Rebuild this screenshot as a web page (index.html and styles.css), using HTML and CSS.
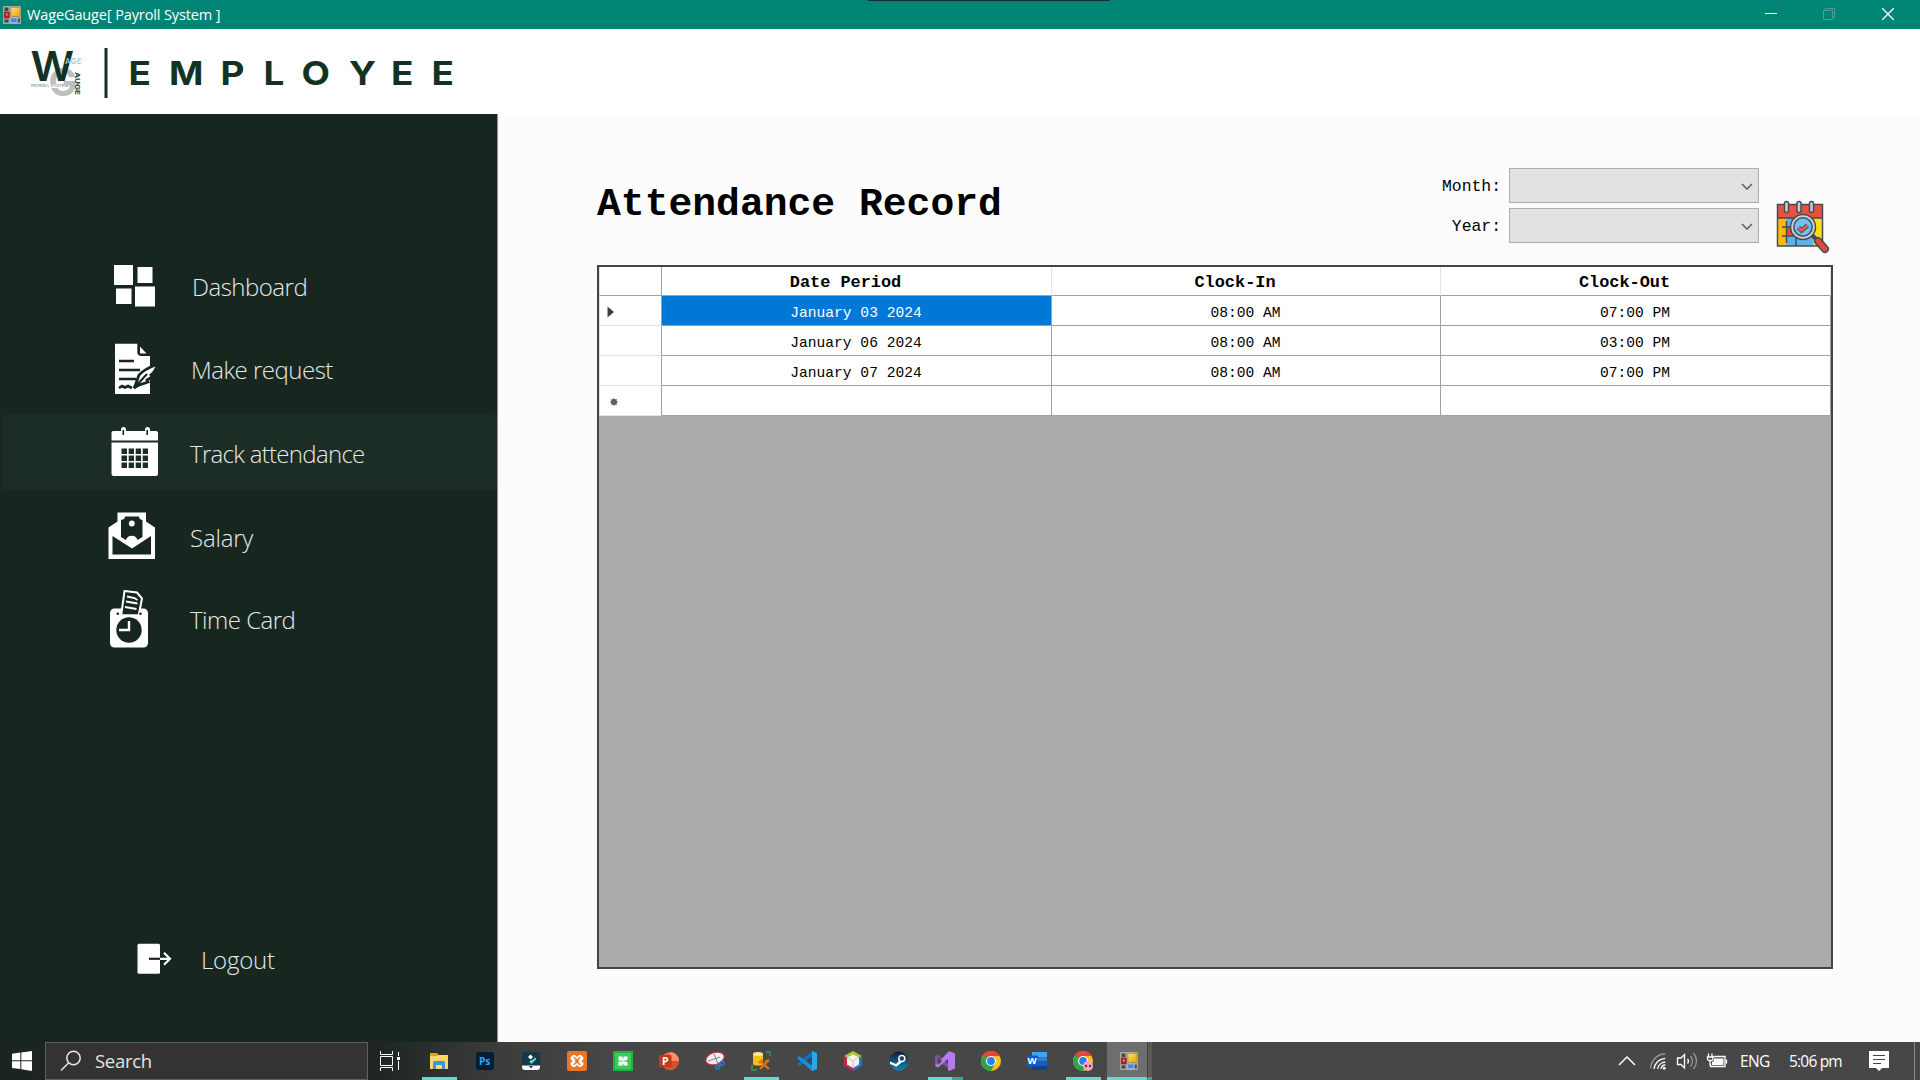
FILE: index.html
```html
<!DOCTYPE html>
<html lang="en">
<head>
<meta charset="utf-8">
<title>WageGauge[ Payroll System ]</title>
<link rel="stylesheet" href="styles.css">
</head>
<body>
<svg class="defs" aria-hidden="true">
  <defs>
    <linearGradient id="gold" x1="0" y1="0" x2="1" y2="1"><stop offset="0" stop-color="#ffe37a"/><stop offset="1" stop-color="#e9a400"/></linearGradient>
    <linearGradient id="steam" x1="0" y1="0" x2="0" y2="1"><stop offset="0" stop-color="#131a3a"/><stop offset="1" stop-color="#1387b8"/></linearGradient>
    <symbol id="form-app" viewBox="0 0 18 18">
      <rect width="18" height="18" rx="1" fill="#a9a9a5"/>
      <rect x="1.5" y="1.5" width="4" height="3.5" fill="#3c4a48"/><rect x="1.5" y="13.500" width="4" height="3" fill="#3c4a48"/><rect x="14.800" y="12.500" width="2" height="4" fill="#3c4a48"/>
      <rect x="8" y="1.200" width="9" height="9" fill="url(#gold)" stroke="#a87700" stroke-width=".5"/>
      <rect x="1.200" y="6" width="5" height="6" fill="#c41e1e" stroke="#7d0f0f" stroke-width=".5"/><rect x="3" y="7.500" width="1.500" height="2" fill="#f39a8c"/>
      <rect x="7.500" y="12" width="6.500" height="4.500" fill="#4d86e6" stroke="#b8d0fa" stroke-width=".5"/>
    </symbol>
    <symbol id="chrome" viewBox="0 0 20 20">
      <circle cx="10" cy="10" r="10" fill="#fcc31e"/>
      <path d="M10 10 1.340 5A10 10 0 0 1 18.660 5L10 5.500z" fill="#ea4335"/>
      <path d="M1.340 5A10 10 0 0 0 10 20L14.200 12.500 10 10 5.800 12.500z" fill="#2ea24c"/>
      <path d="M1.340 5 5.800 12.600 8 6z" fill="#2ea24c"/>
      <circle cx="10" cy="10" r="5" fill="#fff"/><circle cx="10" cy="10" r="3.900" fill="#2f7bea"/>
    </symbol>
  </defs>
</svg>

<header class="titlebar">
  <svg class="titlebar-icon"><use href="#form-app"/></svg>
  <span class="titlebar-text">WageGauge[ Payroll System ]</span>
  <div class="titlebar-notch"></div>
  <svg class="window-buttons" width="164" height="29" viewBox="1756 0 164 29" fill="none">
    <path d="M1765 13.500h12" stroke="#fff"/>
    <path d="M1823.500 10.500h9v9h-9zM1825.500 10V8.500h9v9H1833" stroke="#45a195"/>
    <path d="m1882.300 8.300 11.400 11.400m0-11.400-11.400 11.400" stroke="#fff" stroke-width="1.300"/>
  </svg>
</header>

<div class="brand">
  <svg width="497" height="84" viewBox="0 29 497 84">
    <text class="logo-g" x="48.500" y="95.500">G</text>
    <path d="M47 84h21v4H47z" fill="#fff"/>
    <text class="logo-w" x="30.500" y="80.500" textLength="43.500" lengthAdjust="spacingAndGlyphs">W</text>
    <text class="logo-age" x="65" y="63.500" textLength="16.500">AGE</text>
    <text class="logo-auge" transform="translate(74.500 72) rotate(90)" textLength="23" lengthAdjust="spacingAndGlyphs">AUGE</text>
    <text class="logo-sub" x="31" y="87" textLength="37" lengthAdjust="spacingAndGlyphs">PAYROLL SYSTEM</text>
    <path d="M104.500 48h3v50h-3z" fill="#123324"/>
    <text class="brand-name" transform="scale(1.12 1)" y="84.700" x="114.800 150.900 196.800 235.200 269.300 311.600 349 385.300">EMPLOYEE</text>
  </svg>
</div>

<div class="body">
  <nav class="sidebar">
    <a class="nav-item nav-dashboard">
      <svg viewBox="106 249 56 75"><path fill="#fff" d="M114 265h19v20h-19zM137.500 267h15v16h-15zM116 288.500h15.500v15.500H116zM135 286.500h20v20h-20z"/></svg>
      <span>Dashboard</span>
    </a>
    <a class="nav-item nav-request">
      <svg viewBox="106 332 56 75"><path fill="#fff" d="M115 343.700h22.300V352q0 4 4 4h8.700v38h-35z"/><path fill="#fff" d="M140 346.500v7h6.500z"/><path d="M119 361h15M119 370h21M119 379h17M119 388l3-2 3 1.500 3-1.500 4 2" stroke="#172720" stroke-width="2.700" fill="none"/><path d="M134 388c2-3 3-8 5-13 4-5 11-8 19-11-2 5-4 9-7 11l1 2-5 3 1 2-6 2c-3 0-5 2-8 4z" fill="#fff" stroke="#172720" stroke-width="2.800"/><path d="m134 388 13-14" stroke="#172720" stroke-width="2"/></svg>
      <span>Make request</span>
    </a>
    <a class="nav-item nav-attendance active">
      <svg viewBox="106 415 56 75"><path fill="#fff" d="M113 431h8v-1.500a2.500 2.500 0 0 1 5 0v1.500h19v-1.500a2.500 2.500 0 0 1 5 0v1.500h6q2 0 2 2v7.500h-46.500V433q0-2 1.500-2zM111.500 442.500H158V474q0 2-2 2h-42.500q-2 0-2-2z"/><path stroke="#172720" stroke-width="1.600" d="M123.300 430v5M147.200 430v5"/><path fill="#1c2d26" d="M121.500 448.500h5.500v5.500h-5.500zM128.700 448.500h5.300v5.500h-5.300zM135.700 448.500h5.300v5.500h-5.300zM142.700 448.500h5.300v5.500h-5.300zM121.500 455.500h5.500v5.500h-5.500zM128.700 455.500h5.300v5.500h-5.300zM135.700 455.500h5.300v5.500h-5.300zM142.700 455.500h5.300v5.500h-5.300zM121.500 462.500h5.500v5.500h-5.500zM128.700 462.500h5.300v5.500h-5.300zM135.700 462.500h5.300v5.500h-5.300zM142.700 462.500h5.300v5.500h-5.300z"/></svg>
      <span>Track attendance</span>
    </a>
    <a class="nav-item nav-salary">
      <svg viewBox="106 498 56 75"><path fill="#fff" d="M117.500 512.500h28.500v9l9 6V559h-46.500v-31.500l9-6z"/><path fill="#172720" d="M125 516.500h14q0 3 3.500 3.500v17l-5 3a6 6 0 0 0-11.500 0l-5-3v-17q4-.500 4-3.500zM112.500 536l19.500 12.500L151 536v18.500h-38.500z"/><circle cx="131.800" cy="523.500" r="2.900" fill="#fff"/></svg>
      <span>Salary</span>
    </a>
    <a class="nav-item nav-timecard">
      <svg viewBox="106 581 56 75"><rect x="110" y="608.500" width="38" height="39" rx="4.500" fill="#fff"/><path d="m124.500 591 12.500 1.500 5 6-3.500 18h-17.500z" fill="#172720" stroke="#fff" stroke-width="2"/><path d="m127 596.500 7.500 1.500 3 2M126 601.500l11.500 2M125 607l11.500 2" stroke="#fff" stroke-width="1.800" fill="none"/><path d="M121 615.500h18.500" stroke="#fff" stroke-width="2.500"/><circle cx="117.800" cy="613.700" r="1.300" fill="#172720"/><circle cx="140.500" cy="613.700" r="1.300" fill="#172720"/><circle cx="129" cy="630" r="12.700" fill="#172720"/><path d="M129 621v9h-10" fill="none" stroke="#fff" stroke-width="2.400"/></svg>
      <span>Time Card</span>
    </a>
    <a class="nav-item nav-logout">
      <svg viewBox="134 921 40 75"><rect x="137.500" y="943.700" width="22.500" height="30" rx="1.500" fill="#fff"/><path d="M149 958.800h11" stroke="#172720" stroke-width="2.200"/><path d="M160 958.800h10M164 952.800l6 6-6 6" stroke="#fff" stroke-width="2.200" fill="none"/></svg>
      <span>Logout</span>
    </a>
  </nav>

  <main class="content">
    <div class="content-head">
      <h1>Attendance Record</h1>
      <div class="filters">
        <label class="filter-row"><span>Month:</span><span class="select"><svg width="12" height="8" viewBox="0 0 12 8"><path d="m1 1 5 5 5-5" fill="none" stroke="#555" stroke-width="1.400"/></svg></span></label>
        <label class="filter-row"><span>Year:</span><span class="select"><svg width="12" height="8" viewBox="0 0 12 8"><path d="m1 1 5 5 5-5" fill="none" stroke="#555" stroke-width="1.400"/></svg></span></label>
      </div>
      <svg class="search-calendar" width="54" height="54" viewBox="1776 200 54 54">
        <rect x="1777.500" y="215" width="45" height="31" fill="#ffba08"/>
        <path fill="#5bb3ea" d="M1786.500 218h27v28h-27z"/><path fill="#ffe00f" d="M1813.500 218h9v28h-9z"/><path fill="#e04a3c" d="M1786.500 227h10v8h-10z"/>
        <rect x="1777.500" y="204.500" width="45" height="13.500" fill="#e8503f"/>
        <path d="M1777.500 204.500h45V246h-45zM1777.500 218h45M1786.500 221v22M1796 236v10M1782 227h14M1782 236h14" stroke="#454b54" stroke-width="1.500" fill="none"/>
        <path d="M1786.500 203.500v7M1799 203.500v7M1811.500 203.500v7" stroke="#454b54" stroke-width="5.500" stroke-linecap="round"/><path d="M1786.500 203.500v7M1799 203.500v7M1811.500 203.500v7" stroke="#c8ccd2" stroke-width="2.600" stroke-linecap="round"/>
        <path d="m1812 235 7 7" stroke="#454b54" stroke-width="4"/><path d="m1818 241 7 8" stroke="#454b54" stroke-width="8" stroke-linecap="round"/><path d="m1818 241 7 8" stroke="#e04a3c" stroke-width="5" stroke-linecap="round"/>
        <circle cx="1803" cy="227" r="12.500" fill="#cfd3d8" stroke="#454b54" stroke-width="1.500"/><circle cx="1803" cy="227" r="9.200" fill="#6dc0f2" stroke="#454b54" stroke-width="1.500"/>
        <path d="m1798.500 227.500 3 3 6-5" fill="none" stroke="#454b54" stroke-width="4.500"/><path d="m1798.500 227.500 3 3 6-5" fill="none" stroke="#f0604d" stroke-width="2.400"/>
      </svg>
    </div>

    <div class="grid">
      <div class="grid-row grid-header"><div></div><div>Date Period</div><div>Clock-In</div><div>Clock-Out</div></div>
      <div class="grid-row"><div><svg width="8" height="12" viewBox="0 0 8 12"><path d="m.500.500 6.500 5.500-6.500 5.500z" fill="#404040"/></svg></div><div class="selected">January 03 2024</div><div>08:00 AM</div><div>07:00 PM</div></div>
      <div class="grid-row"><div></div><div>January 06 2024</div><div>08:00 AM</div><div>03:00 PM</div></div>
      <div class="grid-row"><div></div><div>January 07 2024</div><div>08:00 AM</div><div>07:00 PM</div></div>
      <div class="grid-row"><div><svg class="new-mark" width="8" height="8" viewBox="0 0 8 8"><circle cx="4" cy="4" r="3" fill="#505050"/><path d="M4 0v8M0 4h8M1.200 1.200l5.600 5.600M6.800 1.200 1.200 6.800" stroke="#666" stroke-width=".8"/></svg></div><div></div><div></div><div></div></div>
    </div>
  </main>
</div>

<footer class="taskbar">
  <div class="start"><svg width="20" height="20" viewBox="0 0 20 20"><path fill="#fff" d="M0 2.800 8.300 1.600v7.700H0zM9.300 1.500 20 0v9.300H9.300zM0 10.300h8.300V18L0 16.900zM9.300 10.300H20V20L9.300 18.200z"/></svg></div>
  <div class="search"><svg width="22" height="22" viewBox="0 0 22 22"><circle cx="13.500" cy="8" r="6.700" fill="none" stroke="#e8e8e8" stroke-width="1.500"/><path d="M8.700 12.800 1 20.500" stroke="#e8e8e8" stroke-width="1.500"/></svg><span>Search</span></div>
  <div class="apps">
    <div class="app task-view"><svg viewBox="0 0 20 20" fill="none" stroke="#fff"><path d="M.500 0v3.500h12V0M.500 5.500h12v9H.500zM.500 20v-3.500h12V20M18.500 1v4M18.500 10v9"/><path d="M17 6h3v3h-3z" fill="#fff" stroke="none"/></svg></div>
    <div class="app open"><svg viewBox="0 0 20 20"><path fill="#e6a20a" d="M1 2h7l2 2v4H1z"/><path fill="#ffd767" d="M1 5h8l1-1h9v14H1z"/><path fill="#3a96dd" d="M4 12q0-2 2-2h8q2 0 2 2v6h-3v-4H7v4H4z"/></svg></div>
    <div class="app"><svg viewBox="0 0 20 20"><rect x="1" y="1" width="18" height="18" rx="3" fill="#001e36"/><text x="4" y="13.500" font-family="Open Sans" font-size="10" font-weight="700" fill="#31a8ff">Ps</text></svg></div>
    <div class="app"><svg viewBox="0 0 20 20"><rect x="1" y="1" width="18" height="18" rx="3" fill="#17384a"/><path d="M9.500 3.500 12 6 9.500 8.500 7 6z" fill="#fff"/><path d="m13.500 6 2 2-5 5-2.500-2.500 5.500-3z" fill="#50e3c2"/><path d="M1 14.500h18V16a3 3 0 0 1-3 3H4a3 3 0 0 1-3-3z" fill="#fff"/><path d="m8 15 2 2.500 2-2.500z" fill="#17384a"/></svg></div>
    <div class="app"><svg viewBox="0 0 20 20"><rect width="20" height="20" rx="2" fill="#ee7522"/><path d="M6 4h2l2 2 2-2h2l2.500 2.500V8l-2 2 2 2v1.500L14 16h-2l-2-2-2 2H6l-2.500-2.500V12l2-2-2-2V6.500z" fill="#fff"/><path d="M6.800 6.200 10 9l3.200-2.800M6.800 13.800 10 11l3.200 2.800M8 10h4" stroke="#ee7522" stroke-width="1.400" fill="none"/></svg></div>
    <div class="app"><svg viewBox="0 0 20 20"><rect width="20" height="20" fill="#20b43c"/><rect x="2" y="2" width="16" height="16" fill="#3fc95c"/><path fill="#fff" d="M5.500 5.500h4v4h-4zM10.500 5.500h4v3l-1.500 1h-2.500zM5.500 10.500h4v4h-4zM10.500 10.500H13l1.500 1v3h-4z"/><path fill="#fff" opacity=".7" d="M9 7h2v6H9z"/></svg></div>
    <div class="app"><svg viewBox="0 0 20 20"><circle cx="11" cy="10" r="9" fill="#ed6c47"/><path d="M11 1a9 9 0 0 1 9 9h-9z" fill="#ff8f6b"/><path d="M20 10a9 9 0 0 1-16 5l7-5z" fill="#d35230"/><rect y="4" width="12.500" height="12" rx="1" fill="#c13b1b"/><text x="3" y="13.700" font-family="Open Sans" font-size="10.500" font-weight="700" fill="#fff">P</text></svg></div>
    <div class="app"><svg viewBox="0 0 20 20"><ellipse cx="10" cy="7.500" rx="9.500" ry="6" transform="rotate(-18 10 7.500)" fill="#f1eded" stroke="#c9283a" stroke-width="1.200"/><path d="m3 10 12-4M9 3l4 10" stroke="#777" stroke-width=".9"/><circle cx="12.500" cy="16" r="2" fill="none" stroke="#1687cf" stroke-width="1.600"/><circle cx="17" cy="12.500" r="2" fill="none" stroke="#1687cf" stroke-width="1.600"/></svg></div>
    <div class="app open"><svg viewBox="0 0 20 20"><path d="M15 1h4v4M1 14v5h5" fill="none" stroke="#3b9a45" stroke-width="1.500"/><path d="M2 3v10c0 2 10 2 10 0V3z" fill="#f2c316"/><ellipse cx="7" cy="3" rx="5" ry="2" fill="#fbe98d"/><path d="m9 18 8-8M10 11l8 7" stroke="#e36f16" stroke-width="2"/><path d="m8 12 4-3M14 11l4-2" stroke="#e36f16" stroke-width="2.500"/></svg></div>
    <div class="app"><svg viewBox="0 0 20 20"><path d="m15 0 .5 5L2.500 15 0 13z" fill="#0877b9"/><path d="m0 7 2.500-2L15.500 15l-.5 5z" fill="#1690d8"/><path d="m15 0 5 2v16l-5 2z" fill="#28a8f0"/></svg></div>
    <div class="app"><svg viewBox="0 0 20 20"><path d="m10 0 9 5-9 6-9-6z" fill="#a8c83b"/><path d="M1 5v10l9 5V10z" fill="#c42756"/><path d="M19 5v10l-9 5V10z" fill="#2277c4"/><path d="m10 3.500 6 3v7l-6 3.500-6-3.500v-7z" fill="#f2f2ef"/><path d="m4 6.500 6 3.500 6-3.500M10 10v7" stroke="#b7bdba" stroke-width=".8" fill="none"/></svg></div>
    <div class="app"><svg viewBox="0 0 20 20"><circle cx="10" cy="10" r="9.500" fill="url(#steam)"/><circle cx="12.800" cy="7.500" r="3" fill="none" stroke="#fff" stroke-width="1.500"/><path d="m1 10.500 6 2.500 3-3 3 1-4 3.500a2.500 2.500 0 0 1-4 0L1 13z" fill="#fff"/></svg></div>
    <div class="app open stacked"><svg viewBox="0 0 20 20"><path d="M0 5 3 3.500 16 16v4L3 9v7.500L0 15z" fill="#7a50b4"/><path d="m14 0 6 2.500v15L14 20l-1-1V8L3 16.500 0 15 14 0z" fill="#b57aec"/><path d="m3 6 4 4-4 4z" fill="#484848"/></svg></div>
    <div class="app"><svg><use href="#chrome"/></svg></div>
    <div class="app"><svg viewBox="0 0 20 20"><path fill="#41a5ee" d="M5 1h15v5H5z"/><path fill="#2b7cd3" d="M5 6h15v4H5z"/><path fill="#185abd" d="M5 10h15v5H5z"/><path fill="#103f91" d="M5 15h15v4H5z"/><rect y="4.500" width="11" height="11" rx="1" fill="#185abd"/><text x="0.500" y="13.200" font-family="Open Sans" font-size="9.500" font-weight="700" fill="#fff">W</text></svg></div>
    <div class="app open"><svg viewBox="0 0 20 20"><use href="#chrome"/><circle cx="15" cy="15" r="5" fill="#f2a9c0"/><circle cx="13" cy="15" r="1.200" fill="#54333e"/><circle cx="17" cy="15" r="1.200" fill="#54333e"/></svg></div>
    <div class="app current"><svg viewBox="-1 -1 20 20"><use href="#form-app" width="18" height="18"/></svg></div>
    <div class="stack-edge"></div>
  </div>
  <div class="tray">
    <svg width="118" height="38" viewBox="1614 1042 118 38" fill="none" stroke="#fff" stroke-width="1.300">
      <path d="m1619 1065 8-8 8 8" stroke-width="1.500"/>
      <g transform="translate(1650 1053)"><path d="M.700 15.500A14.500 14.500 0 0 1 15.300 1" stroke="#999"/><path d="M4 16A12 12 0 0 1 15.300 5.300M7.500 16A8.500 8.500 0 0 1 15.300 9M11 16a4.500 4.500 0 0 1 4.300-4"/><path d="M13 14h2.500v2.500H13z" fill="#fff" stroke="none"/></g>
      <path d="M1677.500 1058h3.500l3.500-3.500v13.500l-3.500-3.500h-3.500zM1687.500 1059q2 2 0 4.500"/><path d="M1690.500 1056q4 5 0 10.500M1693.500 1053q6 8 0 16" stroke="#999"/>
      <path d="M1713.500 1056.500h11.500v10h-14.500v-3M1726.500 1059.500v4M1708.500 1053.500v3M1712 1053.500v3M1707.500 1057h5.500v2q0 1.500-1.500 1.500h-2.500q-1.500 0-1.500-1.500zM1710 1060.500v5"/><path d="M1714 1058.500h9.500v6.500H1712v-3l2-1z" fill="#fff" stroke="none"/>
    </svg>
    <span class="lang">ENG</span>
    <span class="clock">5:06 pm</span>
    <svg class="notice" width="20" height="20" viewBox="0 0 20 20"><path d="M0 0h20v17h-7l-3 3-3-3H0z" fill="#fff"/><path d="M4 4.500h12M4 8.500h12M4 12.500h8" stroke="#444" stroke-width="1.200"/></svg>
    <div class="show-desktop"></div>
  </div>
</footer>
</body>
</html>
```
FILE: styles.css
```css
* { box-sizing: border-box; }
body {
  margin: 0;
  width: 1920px;
  height: 1080px;
  overflow: hidden;
  display: flex;
  flex-direction: column;
  background: #fcfcfc;
  font-family: "Open Sans", "Noto Sans", sans-serif;
}
svg { display: block; flex: none; }
.defs { position: absolute; width: 0; height: 0; }

/* Title bar */
.titlebar {
  position: relative;
  height: 29px;
  flex: none;
  display: flex;
  align-items: center;
  background: #008575;
  color: #fff;
  padding-left: 3px;
}
.titlebar-icon { width: 18px; height: 18px; }
.titlebar-text { margin-left: 6px; font-size: 14.5px; letter-spacing: -0.12px; white-space: nowrap; }
.titlebar-notch { position: absolute; left: 868px; top: 0; width: 242px; height: 1px; background: #17302c; }
.window-buttons { margin-left: auto; }

/* Brand strip */
.brand { height: 85px; flex: none; background: #fff; }
.brand-name { font: 700 33px Inter, sans-serif; fill: #123324; }
.logo-w { font: 600 40.5px Inter, sans-serif; fill: #123324; }
.logo-g { font: 700 38px Inter, sans-serif; fill: #bcbfbe; }
.logo-age { font: 600 7.5px Inter, sans-serif; fill: #a9c9be; }
.logo-auge { font: 800 6.5px Inter, sans-serif; fill: #2e4a3f; }
.logo-sub { font: 600 3.4px Inter, sans-serif; fill: #8d9a95; }

.body { display: flex; height: 928px; flex: none; }

/* Sidebar */
.sidebar {
  width: 498px;
  height: 928px;
  padding: 135px 0 0 2px;
  display: flex;
  flex-direction: column;
  gap: 8px;
  background: #172720;
  border-right: 1px solid #8d9390;
}
.nav-item {
  height: 75px;
  padding-left: 104px;
  display: flex;
  align-items: center;
  color: #e6e8e7;
  font-size: 24px;
  font-weight: 350;
  letter-spacing: -0.5px;
  white-space: nowrap;
}
.nav-item svg { width: 56px; height: 75px; }
.nav-item span { margin-left: 28px; padding-top: 2px; }
.nav-item.active { background: #1c2d26; border-radius: 3px; }
.nav-item.nav-dashboard span { margin-left: 30px; padding-top: 0; }
.nav-item.nav-request span { margin-left: 29px; padding-top: 0; }
.nav-item.nav-attendance { letter-spacing: -0.7px; }
.nav-item.nav-salary { letter-spacing: -0.2px; }
.nav-item.nav-salary span { padding-top: 3px; }
.nav-item.nav-logout { margin: 257px 0 0; padding-left: 132px; letter-spacing: -0.2px; }
.nav-item.nav-logout svg { width: 40px; }
.nav-item.nav-logout span { margin-left: 27px; }

/* Content */
.content {
  flex: 1;
  padding: 54px 0 0 99px;
  color: #000;
  font-family: "Liberation Mono", "Courier New", monospace;
}
.content-head { display: flex; height: 97px; }
h1 { margin: 14px 0 0; width: 838px; font-size: 39.7px; line-height: 46px; font-weight: 700; white-space: pre; }
.filters { display: flex; flex-direction: column; gap: 5px; width: 324px; }
.filter-row { display: flex; align-items: center; justify-content: flex-end; height: 35px; font-size: 16.4px; }
.filter-row > span:first-child { padding-top: 2px; }
.select {
  width: 250px;
  height: 35px;
  margin-left: 8px;
  padding-right: 5px;
  display: flex;
  align-items: center;
  justify-content: flex-end;
  background: #e1e1e1;
  border: 1px solid #adadad;
}
.select svg { margin-top: 2px; }
.search-calendar { margin: 32px 0 0 17px; }

/* Attendance grid */
.grid { width: 1236px; height: 704px; background: #ababab; border: 2px solid #444; }
.grid-row { display: grid; grid-template-columns: 63px 390px 389px 390px; height: 30px; font-size: 14.6px; }
.grid-row > div {
  display: flex;
  align-items: center;
  justify-content: center;
  padding: 4px 1px 0 0;
  background: #fff;
  border-right: 1px solid #a0a0a0;
  border-bottom: 1px solid #a0a0a0;
  white-space: pre;
}
.grid-row > div:first-child { justify-content: flex-start; padding: 2px 0 0 7px; border-bottom-color: #e2e2e2; border-left: 1px solid #e2e2e2; }
.new-mark { margin-left: 3px; }
.grid-row > .selected { background: #0078d7; color: #fff; }
.grid-header { height: 29px; font-size: 16.9px; font-weight: 600; }
.grid-header > div, .grid-header > div:first-child { border-bottom-color: #a0a0a0; padding: 2px 22px 0 0; }
.grid-header > div:not(:first-child) { border-right-color: #e5e5e5; }

/* Taskbar */
.taskbar {
  height: 38px;
  flex: none;
  display: flex;
  background: linear-gradient(90deg, #1c2421 0, #1e2523 380px, #3c3d3c 500px, #474747 620px);
  color: #fff;
}
.start { width: 45px; display: flex; align-items: center; padding-left: 12px; }
.search {
  width: 323px;
  border: 1px solid #606060;
  background: #333;
  display: flex;
  align-items: center;
  padding-left: 14px;
  color: #e4e4e4;
  font-size: 18.5px;
}
.search span { margin-left: 13px; padding-bottom: 2px; letter-spacing: -0.3px; }
.apps { display: flex; }
.app { width: 46px; display: flex; align-items: center; justify-content: center; }
.app svg { width: 20px; height: 20px; }
.task-view { width: 48px; padding-right: 4px; }
.app.open { background: linear-gradient(#62dcc8, #62dcc8) 50% 100% / 35px 3px no-repeat; }
.app.stacked { background-image: linear-gradient(90deg, #62dcc8 24px, #46a394 24px); }
.app.current { width: 40px; margin-left: 1px; background: #6e6e6e; border-bottom: 3px solid #62dcc8; }
.app.current svg { margin-top: 3px; margin-left: 4px; }
.stack-edge { width: 5px; background: #5a5a5a; border-left: 1px solid #3f3f3f; border-bottom: 3px solid #46a394; }
.tray { margin-left: auto; display: flex; align-items: center; font-size: 15.5px; width: 306px; white-space: nowrap; }
.lang { width: 49px; padding-left: 8px; letter-spacing: -0.6px; }
.clock { width: 88px; padding-left: 8px; letter-spacing: -0.8px; }
.show-desktop { height: 38px; border-left: 1px solid #8a8a8a; margin-left: auto; width: 6px; }
```
